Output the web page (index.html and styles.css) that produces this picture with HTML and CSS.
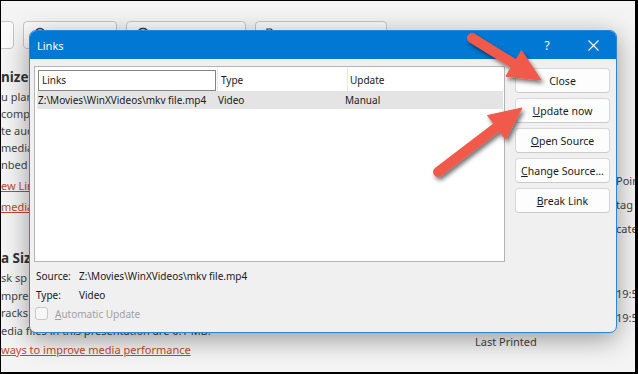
FILE: index.html
```html
<!DOCTYPE html>
<html>
<head>
<meta charset="utf-8">
<link rel="stylesheet" href="styles.css">
</head>
<body>
<div class="frame">
  <div class="toolbar">
    <div class="tb-btn first"></div>
    <div class="tb-btn w94"><svg class="tb-icon" width="12" height="12" viewBox="0 0 12 12"><circle cx="6" cy="6" r="4.5" fill="none" stroke="#333" stroke-width="1.6"/></svg></div>
    <div class="tb-btn w120"><svg class="tb-icon" width="12" height="12" viewBox="0 0 12 12"><rect x="1.5" y="1.5" width="9" height="9" rx="4" fill="none" stroke="#333" stroke-width="1.6"/></svg></div>
    <div class="tb-btn w132"><svg class="tb-icon" width="14" height="12" viewBox="0 0 14 12"><path d="M1 10V2h4l1.5 1.5H13V10z" fill="none" stroke="#333" stroke-width="1.2"/></svg></div>
  </div>
  <div class="main">
    <div class="left">
      <div class="heading">nize I</div>
      <div class="line">u plan</div>
      <div class="line">comp</div>
      <div class="line">te aud</div>
      <div class="line">media</div>
      <div class="line">nbed</div>
      <a class="link">ew Lin</a>
      <a class="link">media</a>
      <div class="heading h2">a Siz</div>
      <div class="line l2">sk sp</div>
      <div class="line l2">mpre</div>
      <div class="line l2">racks</div>
      <div class="line l2">edia files in this presentation are 0.1 MB.</div>
      <a class="link last">ways to improve media performance</a>
    </div>
    <div class="right">
      <div class="prow"><span class="plabel">Title</span><span class="pval">Poin</span></div>
      <div class="prow"><span class="plabel">Tags</span><span class="pval">tag</span></div>
      <div class="prow"><span class="plabel">Categories</span><span class="pval">cate</span></div>
      <div class="pgroup">Related Dates</div>
      <div class="prow"><span class="plabel">Last Modified</span><span class="pval">19:5</span></div>
      <div class="prow"><span class="plabel">Created</span><span class="pval">19:5</span></div>
      <div class="prow"><span class="plabel">Last Printed</span><span class="pval"></span></div>
    </div>
  </div>

  <div class="dialog">
    <div class="titlebar">
      <span class="title">Links</span>
      <span class="tctl help">?</span>
      <span class="tctl close"><svg width="11" height="11" viewBox="0 0 11 11"><path d="M0.5 0.5L10.5 10.5M10.5 0.5L0.5 10.5" stroke="#fff" stroke-width="1.1"/></svg></span>
    </div>
    <div class="dbody">
      <div class="dleft">
        <div class="listbox">
          <div class="lrow lhead">
            <div class="c1"><span class="focus">Links</span></div>
            <div class="c2">Type</div>
            <div class="c3">Update</div>
          </div>
          <div class="lrow lsel">
            <div class="c1">Z:\Movies\WinXVideos\mkv file.mp4</div>
            <div class="c2">Video</div>
            <div class="c3">Manual</div>
          </div>
        </div>
        <div class="info">
          <div class="irow"><span class="ilabel">Source:</span><span>Z:\Movies\WinXVideos\mkv file.mp4</span></div>
          <div class="irow"><span class="ilabel">Type:</span><span>Video</span></div>
          <div class="irow check"><span class="cb"></span><span class="dis"><u>A</u>utomatic Update</span></div>
        </div>
      </div>
      <div class="dbtns">
        <div class="btn">Close</div>
        <div class="btn"><u>U</u>pdate now</div>
        <div class="btn"><u>O</u>pen Source</div>
        <div class="btn"><u>C</u>hange Source...</div>
        <div class="btn"><u>B</u>reak Link</div>
      </div>
    </div>
  </div>

  <svg class="arrows" width="638" height="374" viewBox="0 0 638 374">
    <defs>
      <filter id="sh" x="-20%" y="-20%" width="140%" height="140%">
        <feDropShadow dx="2" dy="3" stdDeviation="2.2" flood-color="#000" flood-opacity="0.55"/>
      </filter>
    </defs>
    <g filter="url(#sh)" fill="#f15a4b" stroke="#f15a4b">
      <line x1="472" y1="38" x2="516" y2="65" stroke-width="10" stroke-linecap="round"/>
      <polygon points="541,80 505.9,76.2 521.5,50.6" stroke-width="1" stroke-linejoin="round"/>
      <line x1="438" y1="172" x2="499" y2="125.5" stroke-width="10" stroke-linecap="round"/>
      <polygon points="522,108 505.7,139.3 487.5,115.5" stroke-width="1" stroke-linejoin="round"/>
    </g>
  </svg>
</div>
</body>
</html>
```

FILE: styles.css
```css
body {
  margin: 0;
  background: #000;
}

.frame {
  position: relative;
  width: 634px;
  height: 371px;
  margin: 1px 3px 2px 1px;
  background: #f4f4f4;
  overflow: hidden;
  font-family: "Noto Sans", sans-serif;
}

/* background toolbar */
.toolbar {
  display: flex;
  gap: 9px;
  padding-top: 20px;
}

.tb-btn {
  box-sizing: border-box;
  height: 28px;
  border: 1px solid #c6c6c6;
  border-radius: 4px;
  background: #fbfbfb;
  padding: 5px 0 0 10px;
  flex: none;
}

.tb-btn.first { width: 94px; margin-left: -81px; }
.tb-btn.w94 { width: 94px; }
.tb-btn.w120 { width: 120px; }
.tb-btn.w132 { width: 132px; }

.tb-icon { display: block; }

/* background content */
.main {
  display: flex;
}

.left {
  width: 474px;
  flex: none;
  padding-top: 18px;
  display: flex;
  flex-direction: column;
  align-items: flex-start;
  white-space: nowrap;
  font-size: 11px;
  color: #444;
}

.heading {
  font-size: 13.5px;
  font-weight: 700;
  line-height: 21px;
  color: #333;
}

.heading.h2 {
  margin-top: 30px;
  line-height: 22px;
}

.line { line-height: 17px; }
.line.l2 { line-height: 17.5px; }

.link {
  line-height: 21px;
  color: #c0492c;
  text-decoration: underline;
}

.line + .link { margin-top: 2px; }
.link.last { line-height: 22px; margin-top: 0; }

.right {
  padding-top: 120px;
  font-size: 11px;
  color: #444;
  white-space: nowrap;
}

.prow {
  display: flex;
  line-height: 24px;
}

.plabel { width: 141px; flex: none; }

.pgroup {
  height: 41px;
  line-height: 41px;
  font-weight: 700;
}

/* dialog */
.dialog {
  position: absolute;
  left: 28px;
  top: 29px;
  width: 588px;
  height: 303px;
  box-sizing: border-box;
  border: 1px solid #2b84da;
  border-radius: 7px;
  background: #f0f0f0;
  overflow: hidden;
  box-shadow: 0 6px 26px rgba(0, 0, 0, 0.38);
  font-size: 10px;
  color: #1a1a1a;
}

.titlebar {
  height: 28px;
  background: #0078d4;
  display: flex;
  align-items: center;
  color: #fff;
}

.title {
  flex: 1;
  padding-left: 7px;
  font-size: 11px;
}

.tctl {
  width: 46px;
  height: 28px;
  display: flex;
  align-items: center;
  justify-content: center;
  font-size: 12px;
}

.tctl svg { display: block; }

.dbody {
  display: flex;
  gap: 10px;
  padding: 7px 6px 0 4px;
}

.dleft {
  width: 471px;
  flex: none;
}

.listbox {
  box-sizing: border-box;
  height: 196px;
  border: 1px solid #b4b4b4;
  background: #fff;
}

.lrow {
  display: flex;
  white-space: nowrap;
}

.lrow .c1 { width: 182px; flex: none; }
.lrow .c2 { width: 126px; flex: none; }
.lrow .c3 { flex: 1; }

.lhead {
  height: 24px;
}

.lhead .c1 {
  box-sizing: border-box;
  padding: 3px 1px 0 3px;
}

.lhead .focus {
  display: block;
  box-sizing: border-box;
  height: 21px;
  border: 1px solid #858585;
  padding: 0 3px;
  line-height: 19px;
}

.lhead .c2,
.lhead .c3 {
  border-left: 1px solid #e8e8e8;
  padding: 3px 0 0 3px;
  line-height: 21px;
}

.lhead .c3 { padding-left: 2px; }

.lsel {
  height: 18px;
  line-height: 18px;
  background: #e4e4e4;
  margin: 0 1px 0 2px;
}

.lsel .c1 { width: 180px; padding-left: 1px; }
.lsel .c2 { width: 126px; }
.lsel .c3 { padding-left: 1px; }

.info {
  padding: 4px 0 0 2px;
}

.irow {
  display: flex;
  align-items: center;
  height: 19px;
  white-space: nowrap;
}

.ilabel { width: 43px; flex: none; }

.cb {
  box-sizing: border-box;
  width: 13px;
  height: 13px;
  border: 1px solid #c8c8c8;
  border-radius: 3px;
  background: #f6f6f6;
  margin: 0 7px 0 -1px;
}

.dis { color: #a0a0a0; }

.dbtns {
  width: 95px;
  flex: none;
  display: flex;
  flex-direction: column;
  gap: 5px;
  padding-top: 2px;
}

.btn {
  box-sizing: border-box;
  height: 25px;
  border: 1px solid #d8d8d8;
  border-bottom-color: #cacaca;
  border-radius: 4px;
  background: #fdfdfd;
  display: flex;
  align-items: center;
  justify-content: center;
  font-size: 10.5px;
  white-space: nowrap;
}

/* annotation arrows */
.arrows {
  position: absolute;
  left: -1px;
  top: -1px;
  pointer-events: none;
}
```
